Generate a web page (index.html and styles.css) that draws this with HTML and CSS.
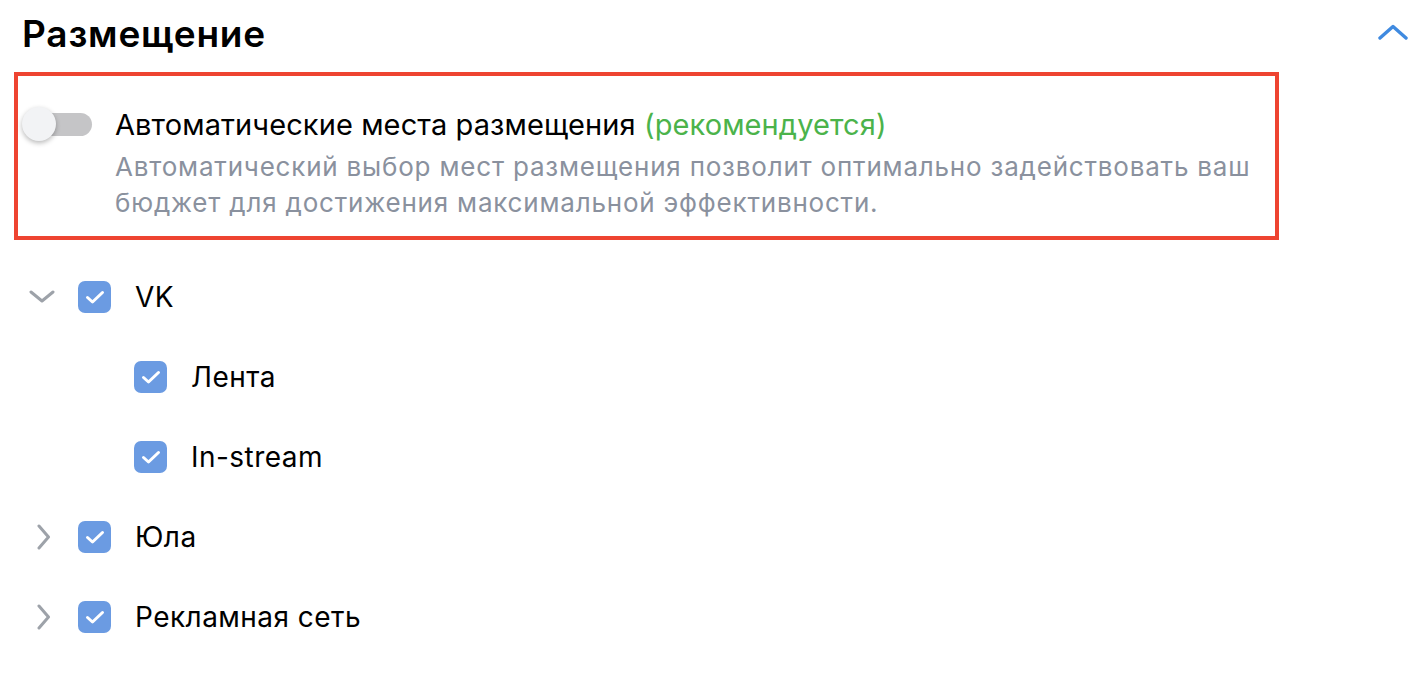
FILE: index.html
```html
<!DOCTYPE html>
<html lang="ru">
<head>
<meta charset="utf-8">
<title>Размещение</title>
<link rel="stylesheet" href="styles.css">
</head>
<body>
<div class="page">
  <header class="head">
    <h1 class="title">Размещение</h1>
    <svg class="collapse" width="30" height="16" viewBox="0 0 30 16"><path d="M2 14 L15 2.5 L28 14" fill="none" stroke="#3f8ae0" stroke-width="3.4" stroke-linecap="round" stroke-linejoin="round"/></svg>
  </header>

  <section class="auto-box">
    <div class="toggle"><span class="track"></span><span class="knob"></span></div>
    <div class="auto-text">
      <div class="auto-title">Автоматические места размещения <span class="rec">(рекомендуется)</span></div>
      <div class="auto-desc">Автоматический выбор мест размещения позволит оптимально задействовать ваш<br>бюджет для достижения максимальной эффективности.</div>
    </div>
  </section>

  <ul class="tree">
    <li class="row">
      <span class="arrow"><svg width="26" height="14" viewBox="0 0 26 14"><path d="M2 2 L13 11 L24 2" fill="none" stroke="#9da2a9" stroke-width="3" stroke-linecap="round" stroke-linejoin="round"/></svg></span>
      <span class="check"><svg width="22" height="16" viewBox="0 0 22 16"><path d="M3.5 8.5 L8.5 13 L18.5 3.5" fill="none" stroke="#fff" stroke-width="3" stroke-linecap="round" stroke-linejoin="round"/></svg></span>
      <span class="label">VK</span>
    </li>
    <li class="row child">
      <span class="check"><svg width="22" height="16" viewBox="0 0 22 16"><path d="M3.5 8.5 L8.5 13 L18.5 3.5" fill="none" stroke="#fff" stroke-width="3" stroke-linecap="round" stroke-linejoin="round"/></svg></span>
      <span class="label">Лента</span>
    </li>
    <li class="row child">
      <span class="check"><svg width="22" height="16" viewBox="0 0 22 16"><path d="M3.5 8.5 L8.5 13 L18.5 3.5" fill="none" stroke="#fff" stroke-width="3" stroke-linecap="round" stroke-linejoin="round"/></svg></span>
      <span class="label">In-stream</span>
    </li>
    <li class="row">
      <span class="arrow right"><svg width="14" height="26" viewBox="0 0 14 26"><path d="M2 2 L11.5 13 L2 24" fill="none" stroke="#9da2a9" stroke-width="3" stroke-linecap="round" stroke-linejoin="round"/></svg></span>
      <span class="check"><svg width="22" height="16" viewBox="0 0 22 16"><path d="M3.5 8.5 L8.5 13 L18.5 3.5" fill="none" stroke="#fff" stroke-width="3" stroke-linecap="round" stroke-linejoin="round"/></svg></span>
      <span class="label">Юла</span>
    </li>
    <li class="row">
      <span class="arrow right"><svg width="14" height="26" viewBox="0 0 14 26"><path d="M2 2 L11.5 13 L2 24" fill="none" stroke="#9da2a9" stroke-width="3" stroke-linecap="round" stroke-linejoin="round"/></svg></span>
      <span class="check"><svg width="22" height="16" viewBox="0 0 22 16"><path d="M3.5 8.5 L8.5 13 L18.5 3.5" fill="none" stroke="#fff" stroke-width="3" stroke-linecap="round" stroke-linejoin="round"/></svg></span>
      <span class="label">Рекламная сеть</span>
    </li>
  </ul>
</div>
</body>
</html>
```

FILE: styles.css
```css
* { box-sizing: border-box; }
html, body { margin: 0; padding: 0; background: #fff; }
body {
  font-family: Inter, "Noto Sans", "Liberation Sans", sans-serif;
  color: #000;
}
.page {
  padding: 0 14px;
  width: 1426px;
}
.head {
  display: flex;
  justify-content: space-between;
  align-items: center;
  height: 72px;
  padding: 0 4px 0 8px;
}
.title {
  margin: 0 0 4px 0;
  font-size: 37px;
  line-height: 44px;
  font-weight: 600;
  letter-spacing: 0.8px;
}
.collapse { display: block; margin-top: -8px; }

.auto-box {
  width: 1265px;
  height: 168px;
  border: 4px solid #ee4431;
  display: flex;
  align-items: flex-start;
  padding: 30px 0 0 4px;
}
.toggle {
  position: relative;
  width: 72px;
  height: 36px;
  flex: none;
}
.track {
  position: absolute;
  left: 3px; top: 7px;
  width: 67px; height: 23px;
  border-radius: 12px;
  background: #c5c5c7;
}
.knob {
  position: absolute;
  left: 0; top: 1px;
  width: 34px; height: 34px;
  border-radius: 50%;
  background: #f2f3f5;
  box-shadow: 0 2px 5px rgba(0,0,0,0.28);
}
.auto-text {
  margin-left: 21px;
  margin-top: 0.5px;
}
.auto-title {
  font-size: 29px;
  line-height: 36px;
  letter-spacing: 0.1px;
}
.rec { color: #4bb34b; }
.auto-desc {
  color: #8a919e;
  font-size: 26px;
  letter-spacing: 0.8px;
  line-height: 36px;
  margin-top: 6px;
}

.tree {
  list-style: none;
  margin: 17px 0 0 0;
  padding: 0;
}
.row {
  display: flex;
  align-items: center;
  height: 80px;
}
.arrow {
  width: 56px;
  margin-right: 8px;
  display: flex;
  justify-content: center;
  flex: none;
}
.arrow.right { padding-left: 3px; }
.row.child { padding-left: 120px; }
.check {
  width: 33px; height: 32px;
  border-radius: 7px;
  background: #6b9be2;
  display: flex;
  align-items: center;
  justify-content: center;
  flex: none;
}
.check svg { display: block; }
.label {
  margin-left: 24px;
  font-size: 28px;
  letter-spacing: 0.45px;
}
```
